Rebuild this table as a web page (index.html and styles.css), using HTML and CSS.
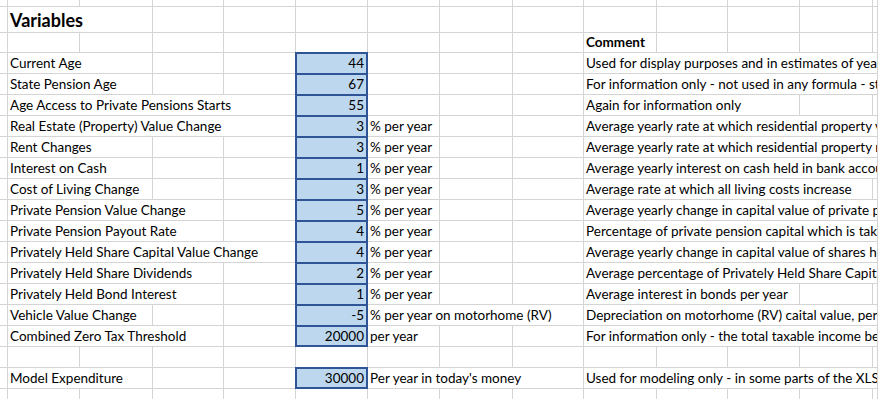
FILE: index.html
```html
<!DOCTYPE html>
<html>
<head>
<meta charset="utf-8">
<title>Variables</title>
<link rel="stylesheet" href="styles.css">
</head>
<body>
<div class="sheet">
  <div class="row r-top">
    <div class="c"></div><div class="c"></div><div class="c"></div><div class="c"></div><div class="c"></div><div class="c"></div><div class="c"></div><div class="c"></div><div class="c"></div><div class="c"></div><div class="c"></div><div class="c"></div><div class="c"></div><div class="c"></div>
  </div>
  <div class="row r-title">
    <div class="c"></div><div class="c s2 title">Variables</div><div class="c"></div><div class="c"></div><div class="c"></div><div class="c"></div><div class="c"></div><div class="c"></div><div class="c"></div><div class="c"></div><div class="c"></div><div class="c"></div><div class="c"></div>
  </div>
  <div class="row r-head">
    <div class="c"></div><div class="c"></div><div class="c"></div><div class="c"></div><div class="c"></div><div class="c"></div><div class="c"></div><div class="c"></div><div class="c"></div><div class="c bold">Comment</div><div class="c"></div><div class="c"></div><div class="c"></div><div class="c"></div>
  </div>

  <div class="row">
    <div class="c"></div><div class="c s2">Current Age</div><div class="c"></div><div class="c"></div>
    <div class="c inp">44</div>
    <div class="c"></div><div class="c"></div><div class="c"></div>
    <div class="c s5">Used for display purposes and in estimates of years remaining</div>
  </div>
  <div class="row">
    <div class="c"></div><div class="c s2">State Pension Age</div><div class="c"></div><div class="c"></div>
    <div class="c inp">67</div>
    <div class="c"></div><div class="c"></div><div class="c"></div>
    <div class="c s5">For information only - not used in any formula - state pension is handled separately</div>
  </div>
  <div class="row">
    <div class="c"></div><div class="c s4">Age Access to Private Pensions Starts</div>
    <div class="c inp">55</div>
    <div class="c"></div><div class="c"></div><div class="c"></div>
    <div class="c s3">Again for information only</div><div class="c"></div><div class="c"></div>
  </div>
  <div class="row">
    <div class="c"></div><div class="c s4">Real Estate (Property) Value Change</div>
    <div class="c inp">3</div>
    <div class="c">% per year</div><div class="c"></div><div class="c"></div>
    <div class="c s5">Average yearly rate at which residential property values change</div>
  </div>
  <div class="row">
    <div class="c"></div><div class="c s2">Rent Changes</div><div class="c"></div><div class="c"></div>
    <div class="c inp">3</div>
    <div class="c">% per year</div><div class="c"></div><div class="c"></div>
    <div class="c s5">Average yearly rate at which residential property rents change</div>
  </div>
  <div class="row">
    <div class="c"></div><div class="c s2">Interest on Cash</div><div class="c"></div><div class="c"></div>
    <div class="c inp">1</div>
    <div class="c">% per year</div><div class="c"></div><div class="c"></div>
    <div class="c s5">Average yearly interest on cash held in bank accounts</div>
  </div>
  <div class="row">
    <div class="c"></div><div class="c s2">Cost of Living Change</div><div class="c"></div><div class="c"></div>
    <div class="c inp">3</div>
    <div class="c">% per year</div><div class="c"></div><div class="c"></div>
    <div class="c s4">Average rate at which all living costs increase</div><div class="c"></div>
  </div>
  <div class="row">
    <div class="c"></div><div class="c s3">Private Pension Value Change</div><div class="c"></div>
    <div class="c inp">5</div>
    <div class="c">% per year</div><div class="c"></div><div class="c"></div>
    <div class="c s5">Average yearly change in capital value of private pensions</div>
  </div>
  <div class="row">
    <div class="c"></div><div class="c s3">Private Pension Payout Rate</div><div class="c"></div>
    <div class="c inp">4</div>
    <div class="c">% per year</div><div class="c"></div><div class="c"></div>
    <div class="c s5">Percentage of private pension capital which is taken as income each year</div>
  </div>
  <div class="row">
    <div class="c"></div><div class="c s4">Privately Held Share Capital Value Change</div>
    <div class="c inp">4</div>
    <div class="c">% per year</div><div class="c"></div><div class="c"></div>
    <div class="c s5">Average yearly change in capital value of shares held privately</div>
  </div>
  <div class="row">
    <div class="c"></div><div class="c s3">Privately Held Share Dividends</div><div class="c"></div>
    <div class="c inp">2</div>
    <div class="c">% per year</div><div class="c"></div><div class="c"></div>
    <div class="c s5">Average percentage of Privately Held Share Capital paid out as dividends</div>
  </div>
  <div class="row">
    <div class="c"></div><div class="c s3">Privately Held Bond Interest</div><div class="c"></div>
    <div class="c inp">1</div>
    <div class="c">% per year</div><div class="c"></div><div class="c"></div>
    <div class="c s3">Average interest in bonds per year</div><div class="c"></div><div class="c"></div>
  </div>
  <div class="row">
    <div class="c"></div><div class="c s2">Vehicle Value Change</div><div class="c"></div><div class="c"></div>
    <div class="c inp">-5</div>
    <div class="c s3">% per year on motorhome (RV)</div>
    <div class="c s5">Depreciation on motorhome (RV) caital value, per year</div>
  </div>
  <div class="row">
    <div class="c"></div><div class="c s3">Combined Zero Tax Threshold</div><div class="c"></div>
    <div class="c inp last">20000</div>
    <div class="c">per year</div><div class="c"></div><div class="c"></div>
    <div class="c s5">For information only - the total taxable income below which no tax is paid</div>
  </div>
  <div class="row">
    <div class="c"></div><div class="c"></div><div class="c"></div><div class="c"></div><div class="c"></div><div class="c"></div><div class="c"></div><div class="c"></div><div class="c"></div><div class="c"></div><div class="c"></div><div class="c"></div><div class="c"></div><div class="c"></div>
  </div>
  <div class="row">
    <div class="c"></div><div class="c s2">Model Expenditure</div><div class="c"></div><div class="c"></div>
    <div class="c inp last">30000</div>
    <div class="c s3">Per year in today's money</div>
    <div class="c s5">Used for modeling only - in some parts of the XLS the value is recalculated</div>
  </div>
  <div class="row">
    <div class="c"></div><div class="c"></div><div class="c"></div><div class="c"></div><div class="c"></div><div class="c"></div><div class="c"></div><div class="c"></div><div class="c"></div><div class="c"></div><div class="c"></div><div class="c"></div><div class="c"></div><div class="c"></div>
  </div>
</div>
</body>
</html>
```

FILE: styles.css
```css
html, body {
  margin: 0;
  padding: 0;
  background: #ffffff;
  overflow: hidden;
}

.sheet {
  display: flex;
  flex-direction: column;
  width: 878px;
  height: 399px;
  overflow: hidden;
  font-family: Lato, "Open Sans", sans-serif;
  font-size: 13.5px;
  color: #000000;
}

.row {
  display: grid;
  grid-template-columns: 8px 72px 73px 71px 72px 72px 72px 73px 71px 73px 71px 72px 73px 1fr;
  height: 21px;
  flex: none;
}

.r-top { height: 7px; }
.r-title { height: 26px; }
.r-head { height: 20px; }

.c {
  box-sizing: border-box;
  border-right: 1px solid #d4d4d4;
  border-bottom: 1px solid #d4d4d4;
  display: flex;
  align-items: flex-end;
  padding: 0 2px 2px 2px;
  line-height: 16px;
  white-space: nowrap;
  overflow: hidden;
  min-width: 0;
}

.s2 { grid-column: span 2; }
.s3 { grid-column: span 3; }
.s4 { grid-column: span 4; }
.s5 { grid-column: span 5; }

.title {
  font-weight: 700;
  font-size: 18px;
  line-height: 20px;
  padding-bottom: 2px;
}

.bold { font-weight: 700; }

.inp {
  position: relative;
  overflow: visible;
  background: #bdd7ee;
  justify-content: flex-end;
  padding-right: 3px;
}

.inp::before {
  content: "";
  position: absolute;
  top: -1px;
  left: -1px;
  right: -1px;
  bottom: -1px;
  border: 2px solid #2f5597;
  border-bottom: none;
  pointer-events: none;
}

.inp.last::before {
  border-bottom: 2px solid #2f5597;
}
```
